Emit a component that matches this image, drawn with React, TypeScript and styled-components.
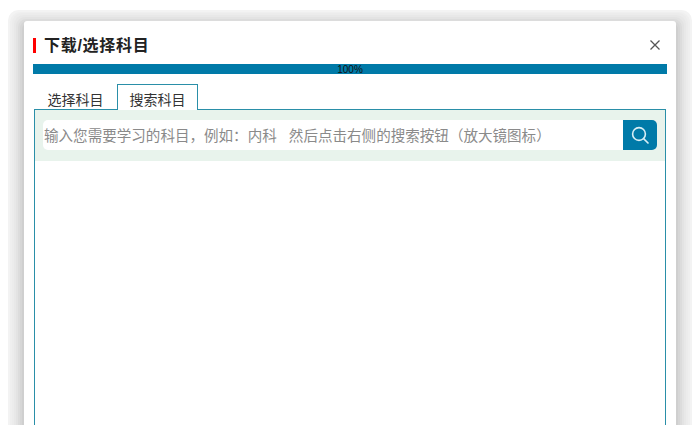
import { createGlobalStyle } from "styled-components";
import styled from "styled-components";

const Global = createGlobalStyle`
  html, body {
    margin: 0;
    background: #fff;
  }
  body {
    font-family: "Liberation Sans", "Noto Sans CJK SC", sans-serif;
  }
`;

const Stage = styled.div`
  height: 425px;
  overflow: hidden;
  padding: 21px 24px 0;
  box-sizing: border-box;
`;

const Modal = styled.div`
  height: 500px;
  background: #fff;
  border-radius: 3px;
  padding: 0 9px;
  box-shadow:
    0 5px 0 2px #cfcfcf,
    0 4px 0 4px #d6d6d6,
    0 4px 0 6px #dcdcdc,
    0 4px 0 8px #e3e3e3,
    0 4px 0 10px #e8e8e8,
    0 4px 0 12px #ececec,
    0 5px 0 14px #efefef,
    0 5px 0 16px #f3f3f3;
`;

const Header = styled.div`
  display: flex;
  align-items: center;
  height: 43px;
  padding-top: 5px;
  box-sizing: border-box;
`;

const Title = styled.h2`
  flex: 1;
  margin: 0;
  padding-left: 8px;
  border-left: 3px solid #ff0000;
  font-size: 16px;
  letter-spacing: 0.7px;
  line-height: 15px;
  font-weight: 700;
  color: #222;
`;

const CloseButton = styled.button`
  display: flex;
  border: 0;
  padding: 0;
  margin-right: 7px;
  background: none;
  color: #555;
`;

const Progress = styled.div`
  height: 10px;
  background: #007aa8;
  color: #111;
  font-family: "Liberation Sans", sans-serif;
  font-size: 10px;
  line-height: 12px;
  text-align: center;
`;

const Tabs = styled.div`
  display: flex;
  gap: 1px;
  margin: 10px 0 0 2px;
  position: relative;
  z-index: 1;
`;

const Tab = styled.div<{ $active?: boolean }>`
  width: 81px;
  height: 26px;
  box-sizing: border-box;
  padding-top: 4px;
  font-size: 14px;
  line-height: 22px;
  text-align: center;
  color: #333;
  border: 1px solid ${(p) => (p.$active ? "#2a8fa8" : "transparent")};
  border-bottom: 0;
  background: ${(p) => (p.$active ? "#fff" : "transparent")};
`;

const Panel = styled.div`
  margin: -1px 1px 0;
  height: 400px;
  border: 1px solid #2a8fa8;
`;

const SearchBar = styled.div`
  display: flex;
  background: #e8f3ec;
  padding: 10px 8px 11px;
`;

const SearchInput = styled.div`
  flex: 1;
  height: 30px;
  padding-left: 1px;
  background: #fff;
  border-radius: 5px 0 0 5px;
  font-size: 14.55px;
  line-height: 32px;
  color: #8a8a8a;
  white-space: pre;
`;

const SearchButton = styled.button`
  display: flex;
  align-items: center;
  justify-content: center;
  width: 34px;
  height: 30px;
  border: 0;
  padding: 0;
  border-radius: 0 5px 5px 0;
  background: #007aa8;
  color: #d8eef5;
`;

export default function App() {
  return (
    <>
      <Global />
      <Stage>
        <Modal>
          <Header>
            <Title>下载/选择科目</Title>
            <CloseButton>
              <svg width="10" height="10" viewBox="0 0 10 10" fill="none" stroke="currentColor" strokeWidth="1.3">
                <path d="M0.5 0.5L9.5 9.5M9.5 0.5L0.5 9.5" />
              </svg>
            </CloseButton>
          </Header>
          <Progress>100%</Progress>
          <Tabs>
            <Tab>选择科目</Tab>
            <Tab $active>搜索科目</Tab>
          </Tabs>
          <Panel>
            <SearchBar>
              <SearchInput>输入您需要学习的科目，例如：内科   然后点击右侧的搜索按钮（放大镜图标）</SearchInput>
              <SearchButton>
                <svg width="19" height="19" viewBox="0 0 19 19" fill="none" stroke="currentColor" strokeWidth="1.6">
                  <circle cx="8" cy="8" r="6.4" />
                  <path d="M12.6 12.6L17.5 17.5" />
                </svg>
              </SearchButton>
            </SearchBar>
          </Panel>
        </Modal>
      </Stage>
    </>
  );
}
